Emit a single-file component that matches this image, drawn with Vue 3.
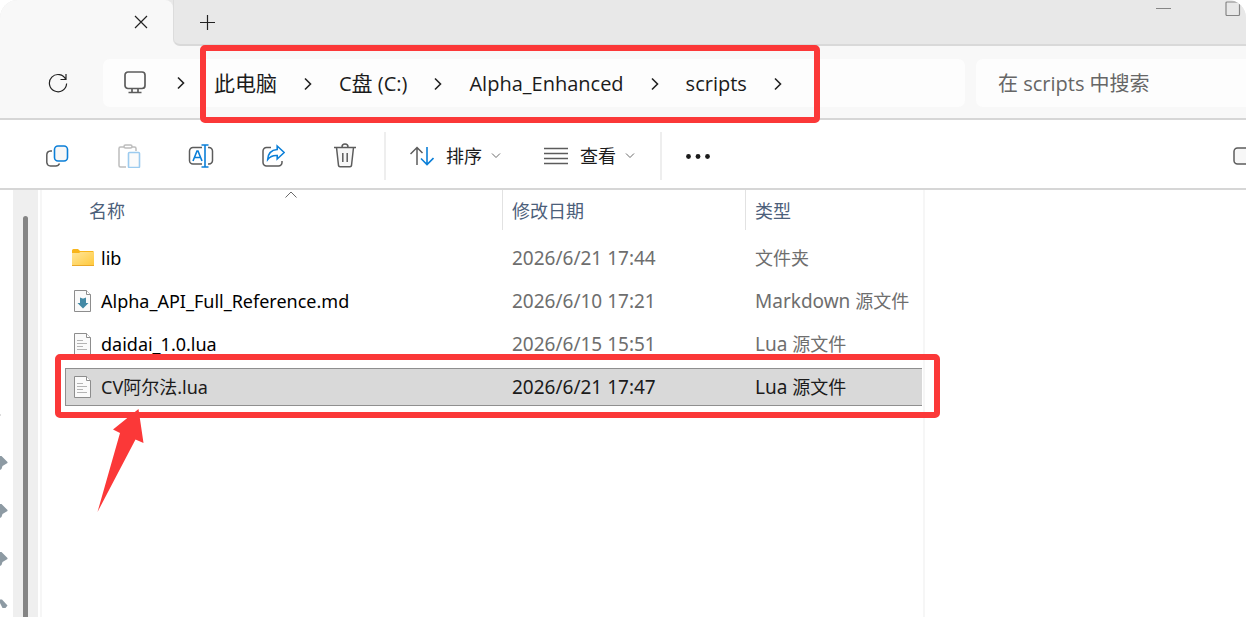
<script setup>
import { ref } from 'vue'

const query = ref('')
const crumbs = ['此电脑', 'C盘 (C:)', 'Alpha_Enhanced', 'scripts']

const files = [
  { name: 'lib', kind: 'folder', date: '2026/6/21 17:44', type: '文件夹' },
  { name: 'Alpha_API_Full_Reference.md', kind: 'md', date: '2026/6/10 17:21', type: 'Markdown 源文件' },
  { name: 'daidai_1.0.lua', kind: 'text', date: '2026/6/15 15:51', type: 'Lua 源文件' },
  { name: 'CV阿尔法.lua', kind: 'text', date: '2026/6/21 17:47', type: 'Lua 源文件', selected: true }
]

// Splits a label into Latin and Chinese runs so each script gets its own size.
const runs = (text) =>
  text.split(/([\u4e00-\u9fff]+)/).filter(Boolean).map((value) => ({
    value,
    cjk: /[\u4e00-\u9fff]/.test(value)
  }))
</script>

<template>
  <div class="window">
    <header class="titlebar">
      <div class="tab">
        <button class="plain" aria-label="关闭标签页">
          <svg width="14" height="14" viewBox="0 0 14 14"><path d="M1 1l12 12M13 1L1 13" class="ink" /></svg>
        </button>
      </div>
      <div class="strip">
        <button class="plain" aria-label="新建标签页">
          <svg width="16" height="16" viewBox="0 0 16 16"><path d="M7.500 1v15M0 8.500h15" class="ink" /></svg>
        </button>
        <div class="controls">
          <button class="plain" aria-label="最小化">
            <svg width="16" height="16" viewBox="0 0 16 16"><path d="M0 7.500h15" class="soft" /></svg>
          </button>
          <button class="plain" aria-label="最大化">
            <svg width="16" height="16" viewBox="0 0 16 16"><rect x="1" y="1" width="13.500" height="13.500" rx="1" class="soft" /></svg>
          </button>
        </div>
      </div>
    </header>

    <nav class="address-row">
      <button class="plain refresh" aria-label="刷新">
        <svg width="20" height="20" viewBox="0 0 20 20">
          <path d="M17.800 6.500A8.600 8.600 0 1 0 18.600 10.500M18 1v5.500h-5.500" class="ink" />
        </svg>
      </button>
      <div class="address">
        <svg class="monitor" width="24" height="24" viewBox="0 0 24 24">
          <rect x="2" y="1" width="20" height="16.500" rx="3" />
          <path d="M9 18v3M15 18v3M5.500 21.500h13" />
        </svg>
        <svg class="chevron first" width="8" height="14" viewBox="0 0 8 14"><path d="M1 1.500l5.500 5.500L1 12.500" /></svg>
        <ol class="crumbs">
          <li v-for="c in crumbs" :key="c">
            <a href="#"><span v-for="(r, i) in runs(c)" :key="i" :class="{ cjk: r.cjk }">{{ r.value }}</span></a>
            <svg class="chevron" width="8" height="14" viewBox="0 0 8 14"><path d="M1 1.500l5.500 5.500L1 12.500" /></svg>
          </li>
          <li class="mark path-mark" aria-hidden="true"></li>
        </ol>
      </div>
      <input v-model="query" class="search" type="text" aria-label="搜索" placeholder="在 scripts 中搜索" />
    </nav>

    <div class="toolbar">
      <button class="tool" aria-label="复制">
        <svg width="24" height="24" viewBox="0 0 24 24">
          <path d="M7 7H5.500A4 4 0 0 0 1.800 11v7.500A4 4 0 0 0 5.500 22h5A4 4 0 0 0 14.500 19.500" class="gray" />
          <rect x="9.500" y="2" width="13" height="15" rx="3.500" class="blue fill" />
        </svg>
      </button>
      <button class="tool" aria-label="粘贴" disabled>
        <svg class="dim" width="24" height="24" viewBox="0 0 24 24">
          <path d="M7 3H3.500A1.500 1.500 0 0 0 2 4.500v17A1.500 1.500 0 0 0 3.500 23H9M15 3h2.500A1.500 1.500 0 0 1 19 4.500V7" class="gray" />
          <rect x="7" y="1" width="8" height="3" rx="1.500" class="gray" />
          <rect x="11.500" y="8.500" width="11" height="15" rx="1" class="blue fill" />
        </svg>
      </button>
      <button class="tool" aria-label="重命名">
        <svg width="26" height="24" viewBox="0 0 26 24">
          <path d="M14 3.500H5A3.500 3.500 0 0 0 1.500 7v9.500A3.500 3.500 0 0 0 5 20h9M20 3.500h1A3.500 3.500 0 0 1 24.500 7v9.500A3.500 3.500 0 0 1 21 20h-1" class="gray" />
          <path d="M5 17l4-10h1l4 10M6.500 13.500h6M13.500 1h7M17 1v22M13.500 23h7" class="blue" />
        </svg>
      </button>
      <button class="tool" aria-label="共享">
        <svg width="24" height="24" viewBox="0 0 24 24">
          <path d="M10 3.500H5.500A3.500 3.500 0 0 0 2 7v11.500A3.500 3.500 0 0 0 5.500 22h12a3.500 3.500 0 0 0 3.500-3.500V17" class="gray" />
          <path d="M16.200 2l7 6.500-7 6.500v-3.500c-4-.300-7 .800-9.500 4C7 9.500 10.200 6 16.200 5.500z" class="blue" />
        </svg>
      </button>
      <button class="tool" aria-label="删除">
        <svg width="24" height="26" viewBox="0 0 24 26">
          <path d="M3.500 4.500l2 18a1.500 1.500 0 0 0 1.500 1.200h10a1.500 1.500 0 0 0 1.500-1.200l2-18" class="gray fill" />
          <path d="M1 4.500h22M9 4a3 3 0 0 1 6 0M9.800 10v9M14.200 10v9" class="gray" />
        </svg>
      </button>
      <span class="divider"></span>
      <button class="menu">
        <svg width="24" height="20" viewBox="0 0 24 20">
          <path d="M7 19V1.500M.500 8L7 1.500 12.500 7" class="gray" />
          <path d="M17 1v17.500M11 12.500l6 6 6.500-6.500" class="blue" />
        </svg>
        <span>排序</span>
        <svg width="10" height="6" viewBox="0 0 10 6"><path d="M1 .500l4 4 4-4" class="thin" /></svg>
      </button>
      <button class="menu view">
        <svg width="24" height="18" viewBox="0 0 24 18"><path d="M0 1.500h24M0 6.500h24M0 11.500h24M0 16.500h24" class="gray" /></svg>
        <span>查看</span>
        <svg width="10" height="6" viewBox="0 0 10 6"><path d="M1 .500l4 4 4-4" class="thin" /></svg>
      </button>
      <span class="divider"></span>
      <button class="plain more" aria-label="更多">
        <svg width="24" height="6" viewBox="0 0 24 6"><circle cx="2.500" cy="3.500" r="2.400" /><circle cx="12" cy="3.500" r="2.400" /><circle cx="21.500" cy="3.500" r="2.400" /></svg>
      </button>
      <button class="plain details" aria-label="详细信息">
        <svg width="13" height="20" viewBox="0 0 13 20"><rect x="1" y="2" width="24" height="16" rx="3.500" class="gray fill" /></svg>
      </button>
    </div>

    <main class="body">
      <aside class="side">
        <svg class="pins" width="13" height="220" viewBox="0 0 13 220">
          <path d="M0 24h1v2H0z" class="trace" />
          <path v-for="y in [72, 120, 168]" :key="y" :transform="`translate(0 ${y})`" d="M0-6h1.500L7.500 0v1L2.500 4 1.500 7 0 8z" />
          <path d="M0 209.500h2l5.500 6-2 2.500H2.500L0 213z" />
        </svg>
        <div class="track"><div class="thumb"></div></div>
      </aside>
      <section class="list">
        <table>
          <thead>
            <tr>
              <th scope="col">
                名称
                <svg class="sort" width="12" height="7" viewBox="0 0 12 7"><path d="M.500 6.500L6 1l5.500 5.500" class="thin" /></svg>
              </th>
              <th scope="col">修改日期</th>
              <th scope="col">类型</th>
            </tr>
          </thead>
          <tbody>
            <tr v-for="f in files" :key="f.name" :class="{ selected: f.selected }">
              <td class="name">
                <svg v-if="f.kind === 'folder'" width="24" height="24" viewBox="0 0 24 24">
                  <defs><linearGradient id="folder" x1="0" y1="0" x2="1" y2="1"><stop offset="0" stop-color="#ffe69a" /><stop offset="1" stop-color="#ffc93c" /></linearGradient></defs>
                  <path d="M1 4.500A1.500 1.500 0 0 1 2.500 3H7l2 2h13.500v5H1z" fill="#f8b51b" />
                  <path d="M1 7h7l1.500-1H23v13.500H1z" fill="url(#folder)" /><path d="M1 19.500h22" stroke="#eaa92a" />
                </svg>
                <svg v-else width="24" height="24" viewBox="0 0 24 24">
                  <path d="M3.500 1.500h12l4 4v17h-16z" fill="#fafafa" stroke="#8d8d8d" />
                  <path d="M15.500 1.500v4h4" fill="#fff" stroke="#8d8d8d" />
                  <path v-if="f.kind === 'md'" d="M9 8.500l2.500 1h1l2.500-1v5.500h2.500L12 19.500 6.500 14H9z" fill="#4389a5" />
                  <path v-else d="M6 8.500h6M6 11.500h10M6 14.500h6M6 17.500h10" stroke="#b4b4b4" />
                </svg>
                <span><span v-for="(r, i) in runs(f.name)" :key="i" :class="{ cjk: r.cjk }">{{ r.value }}</span></span>
              </td>
              <td>{{ f.date }}</td>
              <td>
                <span v-for="(r, i) in runs(f.type)" :key="i" :class="{ cjk: r.cjk }">{{ r.value }}</span>
                <template v-if="f.selected">
                  <i class="mark row-mark" aria-hidden="true"></i>
                  <svg class="arrow" width="47" height="104" viewBox="0 0 47 104" aria-hidden="true"><path d="M41.500 0L46.500 34l-8-3.500L.500 103 23 24l-7-3.500z" /></svg>
                </template>
              </td>
            </tr>
          </tbody>
        </table>
      </section>
      <section class="preview"></section>
    </main>
  </div>
</template>

<style>
body { margin: 0; background: #fff; }
</style>

<style scoped>
* { box-sizing: border-box; }
.window {
  min-height: 100vh;
  display: flex;
  flex-direction: column;
  overflow: hidden;
  border-radius: 18px 18px 0 0;
  background: #fff;
  color: #1b1b1b;
  font: 18px/24px "Noto Sans", "Noto Sans CJK SC", sans-serif;
}
button, input { font: inherit; color: inherit; border: 0; margin: 0; }
button { display: flex; align-items: center; padding: 0; background: none; }
svg { display: block; flex: none; fill: none; }
.ink { stroke: #222; stroke-width: 1.200; }
.soft { stroke: #858585; stroke-width: 1.200; }
.gray { stroke: #5c5c5c; stroke-width: 1.500; }
.blue { stroke: #0b7fd8; stroke-width: 1.600; }
.thin { stroke: #6a6a6a; }
.fill { fill: #f7f7f7; }

.titlebar {
  display: flex;
  height: 46px;
  background: linear-gradient(#e8e8e8 50%, #f8f8f8 50%);
}
.tab {
  width: 173px;
  padding: 15px 25px 0;
  display: flex;
  justify-content: flex-end;
  align-items: flex-start;
  background: #f8f8f8;
  border-top-right-radius: 8px;
}
.strip {
  flex: 1;
  display: flex;
  justify-content: space-between;
  align-items: flex-start;
  padding-left: 26px;
  background: #e8e8e8;
  border-left: 1px solid #dcdcdc;
  border-bottom: 2px solid #d9d9d9;
  border-bottom-left-radius: 7px;
}
.strip > .plain { margin-top: 14px; }
.controls { display: flex; gap: 53px; padding: 1px 5px 0 0; }

.address-row {
  display: flex;
  align-items: center;
  height: 74px;
  padding-top: 2px;
  background: #f8f8f8;
  border-bottom: 2px solid #d6d6d6;
}
.refresh { width: 103px; padding-left: 48px; }
.address {
  flex: 862 1 862px;
  display: flex;
  align-items: center;
  height: 48px;
  padding-left: 20px;
  background: #fdfdfd;
  border-radius: 7px;
}
.monitor { stroke: #5c5c5c; stroke-width: 1.700; }
.chevron { stroke: #222; stroke-width: 1.600; }
.chevron.first { margin: 0 29px 0 30px; }
.crumbs {
  position: relative;
  display: flex;
  height: 48px;
  margin: 0;
  padding: 0;
  list-style: none;
  font-family: "Open Sans", "Noto Sans CJK SC", sans-serif;
  font-size: 20px;
}
.crumbs li { display: flex; align-items: center; padding-top: 1px; }
.crumbs a { color: inherit; text-decoration: none; white-space: pre; }
.crumbs .cjk { font-size: 21px; }
.crumbs .chevron { margin: 0 27px; }
.crumbs .mark, .row-mark {
  position: absolute;
  border: 6px solid #fb3838;
  border-radius: 5px;
  pointer-events: none;
}
.crumbs .path-mark { inset: -14px -11px -16px -14px; }
.search {
  flex: 270 1 270px;
  min-width: 0;
  height: 48px;
  margin-left: 11px;
  padding: 1px 22px 0;
  background: #fdfdfd;
  border-radius: 7px 0 0 7px;
  font-family: "Open Sans", "Noto Sans CJK SC", sans-serif;
  font-size: 20px;
}
.search::placeholder { color: #666; opacity: 1; }

.toolbar {
  display: flex;
  align-items: center;
  height: 70px;
  padding: 4px 0 0 21px;
  border-bottom: 2px solid #d6d6d6;
}
.tool { width: 72px; height: 48px; justify-content: center; }
.dim { opacity: 0.400; }
.divider { width: 2px; height: 48px; margin: 0 24px 0 3px; background: #eee; }
.menu { gap: 12px; height: 48px; margin-right: 43px; }
.menu svg:last-child { margin-left: -3px; }
.view { margin-right: 22px; }
.more svg { fill: #1b1b1b; }
.details { margin-left: auto; }

.body { flex: 1; display: flex; }
.side { display: flex; width: 42px; border-right: 2px solid #f6f6f6; }
.pins { margin-top: 200px; fill: #8d9aa3; }
.trace { fill: #ddd; }
.track { width: 25px; padding: 26px 10px 0; background: #efefef; }
.thumb { width: 5px; height: 100%; background: #858585; border-radius: 3px 3px 0 0; }
.list { width: 883px; padding: 0 1px 0 23px; border-right: 2px solid #f6f6f6; }
.preview { flex: 1; }
table, thead, tbody { display: block; }
table { border-spacing: 0; }
tr { display: grid; }
thead tr {
  grid-template-columns: 423px 243px 1fr;
  height: 40px;
  margin: 0 0 9px 15px;
}
th {
  position: relative;
  padding: 9px 0 0 9px;
  text-align: left;
  font-weight: 400;
  color: #4c607a;
  border-right: 1px solid #e2e2e2;
}
th:last-child { border-right: 0; }
.sort { position: absolute; top: 1px; left: calc(50% - 6px); }
tbody tr {
  position: relative;
  grid-template-columns: 437px 243px 1fr;
  align-items: center;
  height: 38px;
  margin-bottom: 5px;
  border: 1px solid transparent;
  border-right: 0;
}
td { padding: 0 0 0 9px; color: #6e6e6e; font-size: 19px; white-space: pre; }
td .cjk { font-size: 18px; }
td.name { display: flex; align-items: center; gap: 6px; padding-left: 5px; color: #000; font-size: 18px; }
.selected { background: #d9d9d9; border-color: #8f8f8f; }
.selected td { color: #1b1b1b; }
.row-mark { inset: -15px -18px -13px -11px; }
.arrow { position: absolute; left: 31px; top: 40px; fill: #fb3838; }
</style>
